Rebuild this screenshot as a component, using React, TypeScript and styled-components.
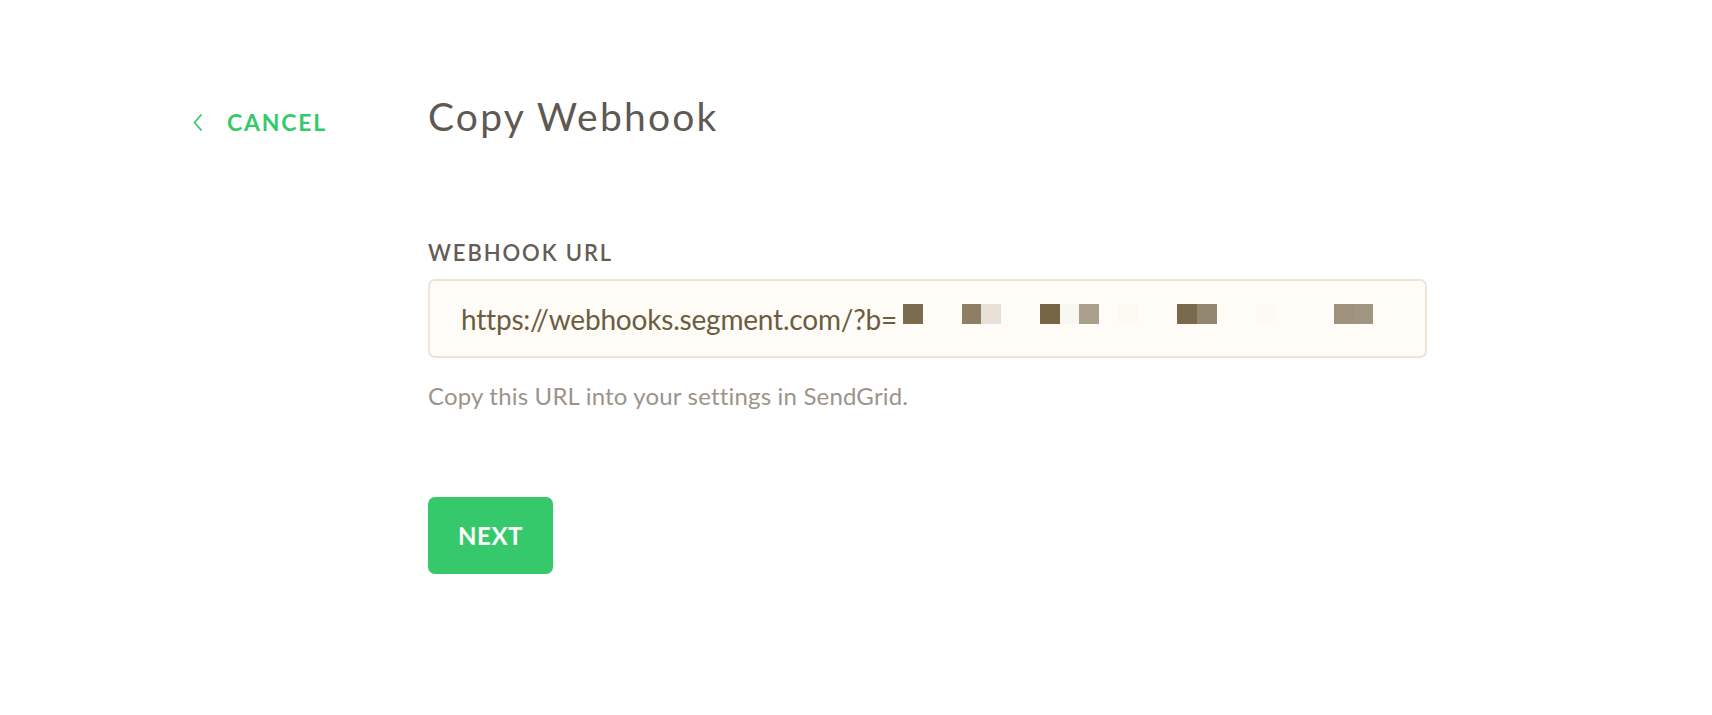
import React from "react";
import styled, { createGlobalStyle } from "styled-components";

const GlobalStyle = createGlobalStyle`
  html, body {
    margin: 0;
    padding: 0;
    background: #ffffff;
  }
  body {
    font-family: Lato, "Open Sans", "Liberation Sans", sans-serif;
    -webkit-font-smoothing: antialiased;
  }
`;

const Page = styled.div`
  display: flex;
  align-items: baseline;
  padding: 93px 0 0 193px;
  min-height: 715px;
  box-sizing: border-box;
`;

const Aside = styled.aside`
  width: 235px;
  flex: none;
`;

const CancelLink = styled.a`
  display: inline-flex;
  align-items: baseline;
  gap: 25px;
  color: #36c96b;
  font-size: 23px;
  font-weight: 700;
  letter-spacing: 1.8px;
  line-height: 46px;
  text-decoration: none;
  cursor: pointer;
`;

const Chevron = styled.svg`
  width: 9px;
  height: 17px;
  align-self: center;
`;

const Main = styled.main`
  display: flex;
  flex-direction: column;
  align-items: flex-start;
  width: 999px;
`;

const Title = styled.h1`
  margin: 0;
  font-size: 39px;
  line-height: 46px;
  font-weight: 400;
  letter-spacing: 2.2px;
  color: #5f5954;
`;

const FieldLabel = styled.label`
  margin-top: 101px;
  font-size: 22px;
  line-height: 26px;
  font-weight: 600;
  letter-spacing: 1.9px;
  color: #645c56;
`;

const UrlBox = styled.div`
  margin-top: 13px;
  width: 100%;
  height: 79px;
  box-sizing: border-box;
  padding: 0 0 0 31px;
  background: #fffcf7;
  border: 2px solid #ece5d7;
  border-radius: 7px;
  font-size: 28px;
  line-height: 77px;
  color: #6b5d42;
  letter-spacing: -0.2px;
  white-space: nowrap;
  overflow: hidden;
`;

const Mosaic = styled.span`
  margin-left: 6px;
`;

const Cell = styled.span<{ $c: string }>`
  display: inline-block;
  width: 19.6px;
  height: 20px;
  vertical-align: 6px;
  background: ${(p) => p.$c};
`;

const Hint = styled.p`
  margin: 23px 0 0;
  font-size: 24px;
  line-height: 30px;
  letter-spacing: 0.18px;
  color: #9c948b;
`;

const NextButton = styled.button`
  margin-top: 86px;
  width: 125px;
  height: 77px;
  border: none;
  border-radius: 7px;
  background: #36c96b;
  color: #ffffff;
  font-family: inherit;
  font-size: 24px;
  font-weight: 700;
  letter-spacing: 0.5px;
  cursor: pointer;
`;

const cells = [
  "#7b6b4f",
  "transparent",
  "transparent",
  "#8e7e64",
  "#e7e0d7",
  "transparent",
  "transparent",
  "#766646",
  "#f8f6f0",
  "#aaa08b",
  "transparent",
  "#fcf9f3",
  "transparent",
  "transparent",
  "#7a6a4d",
  "#938770",
  "transparent",
  "transparent",
  "#fdfaf5",
  "transparent",
  "transparent",
  "transparent",
  "#9f927d",
  "#a09581",
];

export default function App() {
  return (
    <>
      <GlobalStyle />
      <Page>
        <Aside>
          <CancelLink>
            <Chevron viewBox="0 0 9 17" fill="none">
              <polyline
                points="8,1 1.5,8.5 8,16"
                stroke="#36c96b"
                strokeWidth="1.8"
                strokeLinecap="round"
                strokeLinejoin="round"
              />
            </Chevron>
            CANCEL
          </CancelLink>
        </Aside>
        <Main>
          <Title>Copy Webhook</Title>
          <FieldLabel>WEBHOOK URL</FieldLabel>
          <UrlBox>
            https://webhooks.segment.com/?b=
            <Mosaic>
              {cells.map((c, i) => (
                <Cell key={i} $c={c} />
              ))}
            </Mosaic>
          </UrlBox>
          <Hint>Copy this URL into your settings in SendGrid.</Hint>
          <NextButton>NEXT</NextButton>
        </Main>
      </Page>
    </>
  );
}
